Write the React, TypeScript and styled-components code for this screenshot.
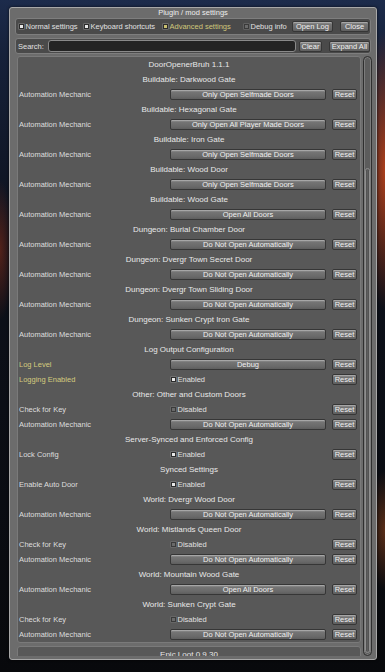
import React from 'react';
import styled, { createGlobalStyle } from 'styled-components';

const Global = createGlobalStyle`
  html, body { margin: 0; padding: 0; width: 385px; height: 672px; overflow: hidden; background: #08090c; }
  #root { width: 385px; height: 672px; }
`;

const Scene = styled.div`
  width: 385px;
  height: 672px;
  overflow: hidden;
  box-sizing: border-box;
  padding: 7px 8px 0 9px;
  font-family: "Liberation Sans", Arial, sans-serif;
  background:
    radial-gradient(ellipse 22px 140px at 385px 170px, rgba(200, 70, 25, 0.85), transparent),
    radial-gradient(ellipse 18px 60px at 385px 530px, rgba(170, 80, 30, 0.5), transparent),
    radial-gradient(ellipse 14px 70px at 0px 250px, rgba(130, 45, 25, 0.6), transparent),
    linear-gradient(180deg, #1c2b4b 0%, #16213a 8%, #0d111b 35%, #08090c 100%);
`;

const Window = styled.div`
  width: 368px;
  height: 653px;
  box-sizing: border-box;
  border: 1px solid #a8a8a8;
  border-radius: 3px;
  background: #6c6c6c;
  padding: 0 5px 3px 5px;
  display: flex;
  flex-direction: column;
  box-shadow: 0 0 3px rgba(0, 0, 0, 0.7);
`;

const Title = styled.div`
  height: 10px;
  line-height: 10px;
  font-size: 7.5px;
  color: #ededed;
  text-align: center;
`;

const Bar = styled.div`
  box-sizing: border-box;
  border: 1px solid #7e7e7e;
  background: #4a4a4a;
  border-radius: 3px;
  display: flex;
  align-items: center;
`;

const Toolbar = styled(Bar)`
  height: 17px;
  padding: 0 2px 0 3px;
`;

const SearchRow = styled(Bar)`
  height: 16px;
  margin-top: 3px;
  padding: 0 2px 0 1px;
`;

const Toggle = styled.div<{ $warn?: boolean; $w?: number }>`
  display: flex;
  align-items: center;
  gap: 1.5px;
  ${p => (p.$w ? `width: ${p.$w}px; flex-shrink: 0;` : '')}
  font-size: 7.5px;
  color: ${p => (p.$warn ? '#d0c77b' : '#e0e0e0')};
  white-space: nowrap;
`;

const Box = styled.span<{ $on?: boolean; $warn?: boolean }>`
  display: inline-block;
  flex-shrink: 0;
  width: 5px;
  height: 5px;
  box-sizing: border-box;
  border: 1px solid ${p => (p.$on ? '#2c2c2c' : '#3a3a3a')};
  background: ${p => (p.$on ? (p.$warn ? '#c9c070' : '#e8e8e8') : '#6a6a6a')};
  box-shadow: 0 0 0 0.5px ${p => (p.$on ? '#8a8a8a' : '#777')};
`;

const Spacer = styled.div<{ $w: number }>`
  width: ${p => p.$w}px;
  flex-shrink: 0;
`;

const Button = styled.div<{ $w?: number }>`
  box-sizing: border-box;
  height: 11px;
  ${p => (p.$w ? `width: ${p.$w}px;` : '')}
  flex-shrink: 0;
  border: 1px solid #363636;
  border-radius: 2px;
  background: linear-gradient(180deg, #9c9c9c 0%, #747474 25%, #6a6a6a 70%, #5e5e5e 100%);
  box-shadow: inset 0 1px 0 rgba(255, 255, 255, 0.18);
  color: #f0f0f0;
  font-size: 7.5px;
  line-height: 9px;
  text-align: center;
  white-space: nowrap;
  overflow: hidden;
`;

const SearchLabel = styled.div`
  font-size: 7.5px;
  color: #e0e0e0;
  padding-left: 1px;
  width: 30px;
  flex-shrink: 0;
`;

const SearchInput = styled.div`
  box-sizing: border-box;
  width: 248px;
  height: 12px;
  background: #242424;
  border: 1px solid #8a8a8a;
  border-radius: 3px;
  flex-shrink: 0;
`;

const Scroll = styled.div`
  display: flex;
  gap: 2px;
  height: 600px;
  margin: 2px -1px 0 2px;
  flex-shrink: 0;
`;

const Content = styled.div`
  width: 344px;
  height: 600px;
  overflow: hidden;
  display: flex;
  flex-direction: column;
  gap: 3px;
`;

const Panel = styled.div`
  box-sizing: border-box;
  border: 1px solid #7a7a7a;
  background: #585858;
  border-radius: 3px;
  flex-shrink: 0;
`;

const Header = styled.div`
  height: 15px;
  line-height: 15px;
  text-align: center;
  font-size: 8px;
  color: #e8e8e8;
  white-space: nowrap;
`;

const Row = styled.div`
  height: 15px;
  display: grid;
  grid-template-columns: 1fr 156px 25px;
  column-gap: 6px;
  align-items: center;
  padding: 0 3px 0 1px;
`;

const Label = styled.div<{ $warn?: boolean }>`
  font-size: 7.5px;
  color: ${p => (p.$warn ? '#d4cb7e' : '#dedede')};
  white-space: nowrap;
`;

const CheckCell = styled(Toggle)`
  padding-left: 1px;
`;

const Track = styled.div`
  width: 9px;
  height: 600px;
  box-sizing: border-box;
  border: 1px solid #2f2f2f;
  border-radius: 5px;
  background: #5c5c5c;
  box-shadow: inset 0 0 0 1px #7c7c7c;
  display: flex;
  flex-direction: column;
  padding: 111px 1px 2px 1px;
`;

const Thumb = styled.div`
  flex: 1;
  box-sizing: border-box;
  border: 1px solid #8e8e8e;
  border-radius: 3px;
  background: linear-gradient(90deg, #4c4c4c, #5e5e5e 50%, #4c4c4c);
`;

type Item =
  | { label: string; kind: 'select'; value: string; warn?: boolean }
  | { label: string; kind: 'check'; on: boolean; warn?: boolean };

type Section = { title: string; items: Item[] };

const AM = (value: string): Item => ({ label: 'Automation Mechanic', kind: 'select', value });
const KEY: Item = { label: 'Check for Key', kind: 'check', on: false };
const DNO = 'Do Not Open Automatically';

const sections: Section[] = [
  { title: 'Buildable: Darkwood Gate', items: [AM('Only Open Selfmade Doors')] },
  { title: 'Buildable: Hexagonal Gate', items: [AM('Only Open All Player Made Doors')] },
  { title: 'Buildable: Iron Gate', items: [AM('Only Open Selfmade Doors')] },
  { title: 'Buildable: Wood Door', items: [AM('Only Open Selfmade Doors')] },
  { title: 'Buildable: Wood Gate', items: [AM('Open All Doors')] },
  { title: 'Dungeon: Burial Chamber Door', items: [AM(DNO)] },
  { title: 'Dungeon: Dvergr Town Secret Door', items: [AM(DNO)] },
  { title: 'Dungeon: Dvergr Town Sliding Door', items: [AM(DNO)] },
  { title: 'Dungeon: Sunken Crypt Iron Gate', items: [AM(DNO)] },
  {
    title: 'Log Output Configuration',
    items: [
      { label: 'Log Level', kind: 'select', value: 'Debug', warn: true },
      { label: 'Logging Enabled', kind: 'check', on: true, warn: true },
    ],
  },
  { title: 'Other: Other and Custom Doors', items: [KEY, AM(DNO)] },
  { title: 'Server-Synced and Enforced Config', items: [{ label: 'Lock Config', kind: 'check', on: true }] },
  { title: 'Synced Settings', items: [{ label: 'Enable Auto Door', kind: 'check', on: true }] },
  { title: 'World: Dvergr Wood Door', items: [AM(DNO)] },
  { title: 'World: Mistlands Queen Door', items: [KEY, AM(DNO)] },
  { title: 'World: Mountain Wood Gate', items: [AM('Open All Doors')] },
  { title: 'World: Sunken Crypt Gate', items: [KEY, AM(DNO)] },
];

function SettingRow({ item }: { item: Item }) {
  return (
    <Row>
      <Label $warn={item.warn}>{item.label}</Label>
      {item.kind === 'select' ? (
        <Button>{item.value}</Button>
      ) : (
        <CheckCell>
          <Box $on={item.on} />
          {item.on ? 'Enabled' : 'Disabled'}
        </CheckCell>
      )}
      <Button>Reset</Button>
    </Row>
  );
}

export default function App() {
  return (
    <>
      <Global />
      <Scene>
        <Window>
          <Title>Plugin / mod settings</Title>
          <Toolbar>
            <Toggle $w={65}>
              <Box $on />
              Normal settings
            </Toggle>
            <Toggle $w={79}>
              <Box $on />
              Keyboard shortcuts
            </Toggle>
            <Toggle $w={81} $warn>
              <Box $on $warn />
              Advanced settings
            </Toggle>
            <Toggle $w={48}>
              <Box />
              Debug info
            </Toggle>
            <Button $w={41}>Open Log</Button>
            <Spacer $w={7} />
            <Button $w={29}>Close</Button>
          </Toolbar>
          <SearchRow>
            <SearchLabel>Search:</SearchLabel>
            <SearchInput />
            <Spacer $w={3} />
            <Button $w={23}>Clear</Button>
            <Spacer $w={7} />
            <Button $w={41}>Expand All</Button>
          </SearchRow>
          <Scroll>
            <Content>
              <Panel>
                <Header>DoorOpenerBruh 1.1.1</Header>
                {sections.map(s => (
                  <React.Fragment key={s.title}>
                    <Header>{s.title}</Header>
                    {s.items.map((it, i) => (
                      <SettingRow key={i} item={it} />
                    ))}
                  </React.Fragment>
                ))}
              </Panel>
              <Panel>
                <Header>Epic Loot 0.9.30</Header>
              </Panel>
            </Content>
            <Track>
              <Thumb />
            </Track>
          </Scroll>
        </Window>
      </Scene>
    </>
  );
}
